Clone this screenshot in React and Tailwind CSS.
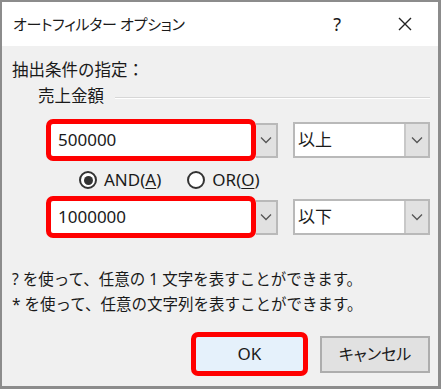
import React from "react";

const font = "font-['Noto_Sans','Noto_Sans_CJK_JP',sans-serif]";

const Chevron = () => (
  <svg width="12" height="8" viewBox="0 0 12 8" className="block">
    <path d="M1 1.5 L6 6.5 L11 1.5" fill="none" stroke="#555" strokeWidth="1.3" />
  </svg>
);

const FilterRow = ({ value, op }) => (
  <div className="flex items-center">
    <div className="w-[210px] h-[42px] rounded-[7px] border-[5px] border-[#ff0000] bg-white flex items-center pl-[7px] text-[17px] text-[#1a1a1a]">
      {value}
    </div>
    <div className="w-[22px] h-[35px] bg-[#e1e1e1] border-2 border-l-0 border-[#b9b9b9] flex items-center justify-center">
      <Chevron />
    </div>
    <div className="ml-[15px] w-[137px] h-[36px] border-2 border-[#b9b9b9] bg-white flex">
      <div className="flex-1 flex items-center pl-[3px] text-[17px] text-[#1a1a1a]">{op}</div>
      <div className="w-[24px] bg-[#e1e1e1] border-l-2 border-[#c8c8c8] flex items-center justify-center">
        <Chevron />
      </div>
    </div>
  </div>
);

const Radio = ({ checked }) => (
  <div className="w-[18px] h-[18px] rounded-full border-2 border-[#333] bg-white flex items-center justify-center">
    {checked && <div className="w-[9px] h-[9px] rounded-full bg-[#333]" />}
  </div>
);

export default function App() {
  return (
    <div className={`w-[441px] h-[389px] border-2 border-b-[3px] border-r-[3px] border-[#8c8c8c] bg-[#f0f0f0] flex flex-col ${font} text-[#1a1a1a]`}>
      <div className="h-[44px] bg-white flex items-center pl-[11px] pr-[26px]">
        <span className="text-[15px] [font-feature-settings:'palt'] tracking-[-0.3px]">オートフィルター オプション</span>
        <span className="ml-auto text-[18px] mr-[57px]">?</span>
        <svg width="14" height="14" viewBox="0 0 14 14">
          <path d="M1 1 L13 13 M13 1 L1 13" stroke="#222" strokeWidth="1.4" />
        </svg>
      </div>

      <div className="flex flex-col pl-[10px] pr-[8px]">
        <div className="mt-[12px] h-[24px] leading-[24px] text-[16.5px]">抽出条件の指定：</div>
        <div className="mt-[2px] h-[24px] flex items-center pl-[26px]">
          <span className="text-[16.5px] leading-[24px]">売上金額</span>
          <div className="ml-[11px] flex-1 flex flex-col mt-[4px]">
            <div className="h-px bg-[#d7d7d7]" />
            <div className="h-px bg-white" />
          </div>
        </div>

        <div className="mt-[11px] pl-[34px]">
          <FilterRow value="500000" op="以上" />
        </div>

        <div className="mt-[7px] h-[24px] flex items-center pl-[67px] text-[17px]">
          <Radio checked />
          <span className="ml-[7px]">
            AND(<span className="underline underline-offset-2">A</span>)
          </span>
          <div className="ml-[26px]">
            <Radio />
          </div>
          <span className="ml-[7px]">
            OR(<span className="underline underline-offset-2">O</span>)
          </span>
        </div>

        <div className="mt-[4px] pl-[34px]">
          <FilterRow value="1000000" op="以下" />
        </div>

        <div className="mt-[29px] h-[25px] leading-[25px] text-[15.5px]">? を使って、任意の 1 文字を表すことができます。</div>
        <div className="h-[25px] leading-[25px] text-[15.5px]">* を使って、任意の文字列を表すことができます。</div>

        <div className="mt-[15px] flex items-center justify-end">
          <div className="w-[117px] h-[44px] rounded-[7px] border-[5px] border-[#ff0000] bg-[#e5f1fb] flex items-center justify-center text-[17px]">
            OK
          </div>
          <div className="ml-[12px] w-[110px] h-[37px] border-2 border-[#adadad] bg-[#e1e1e1] flex items-center justify-center text-[16px] [font-feature-settings:'palt']">
            キャンセル
          </div>
        </div>
      </div>
    </div>
  );
}
